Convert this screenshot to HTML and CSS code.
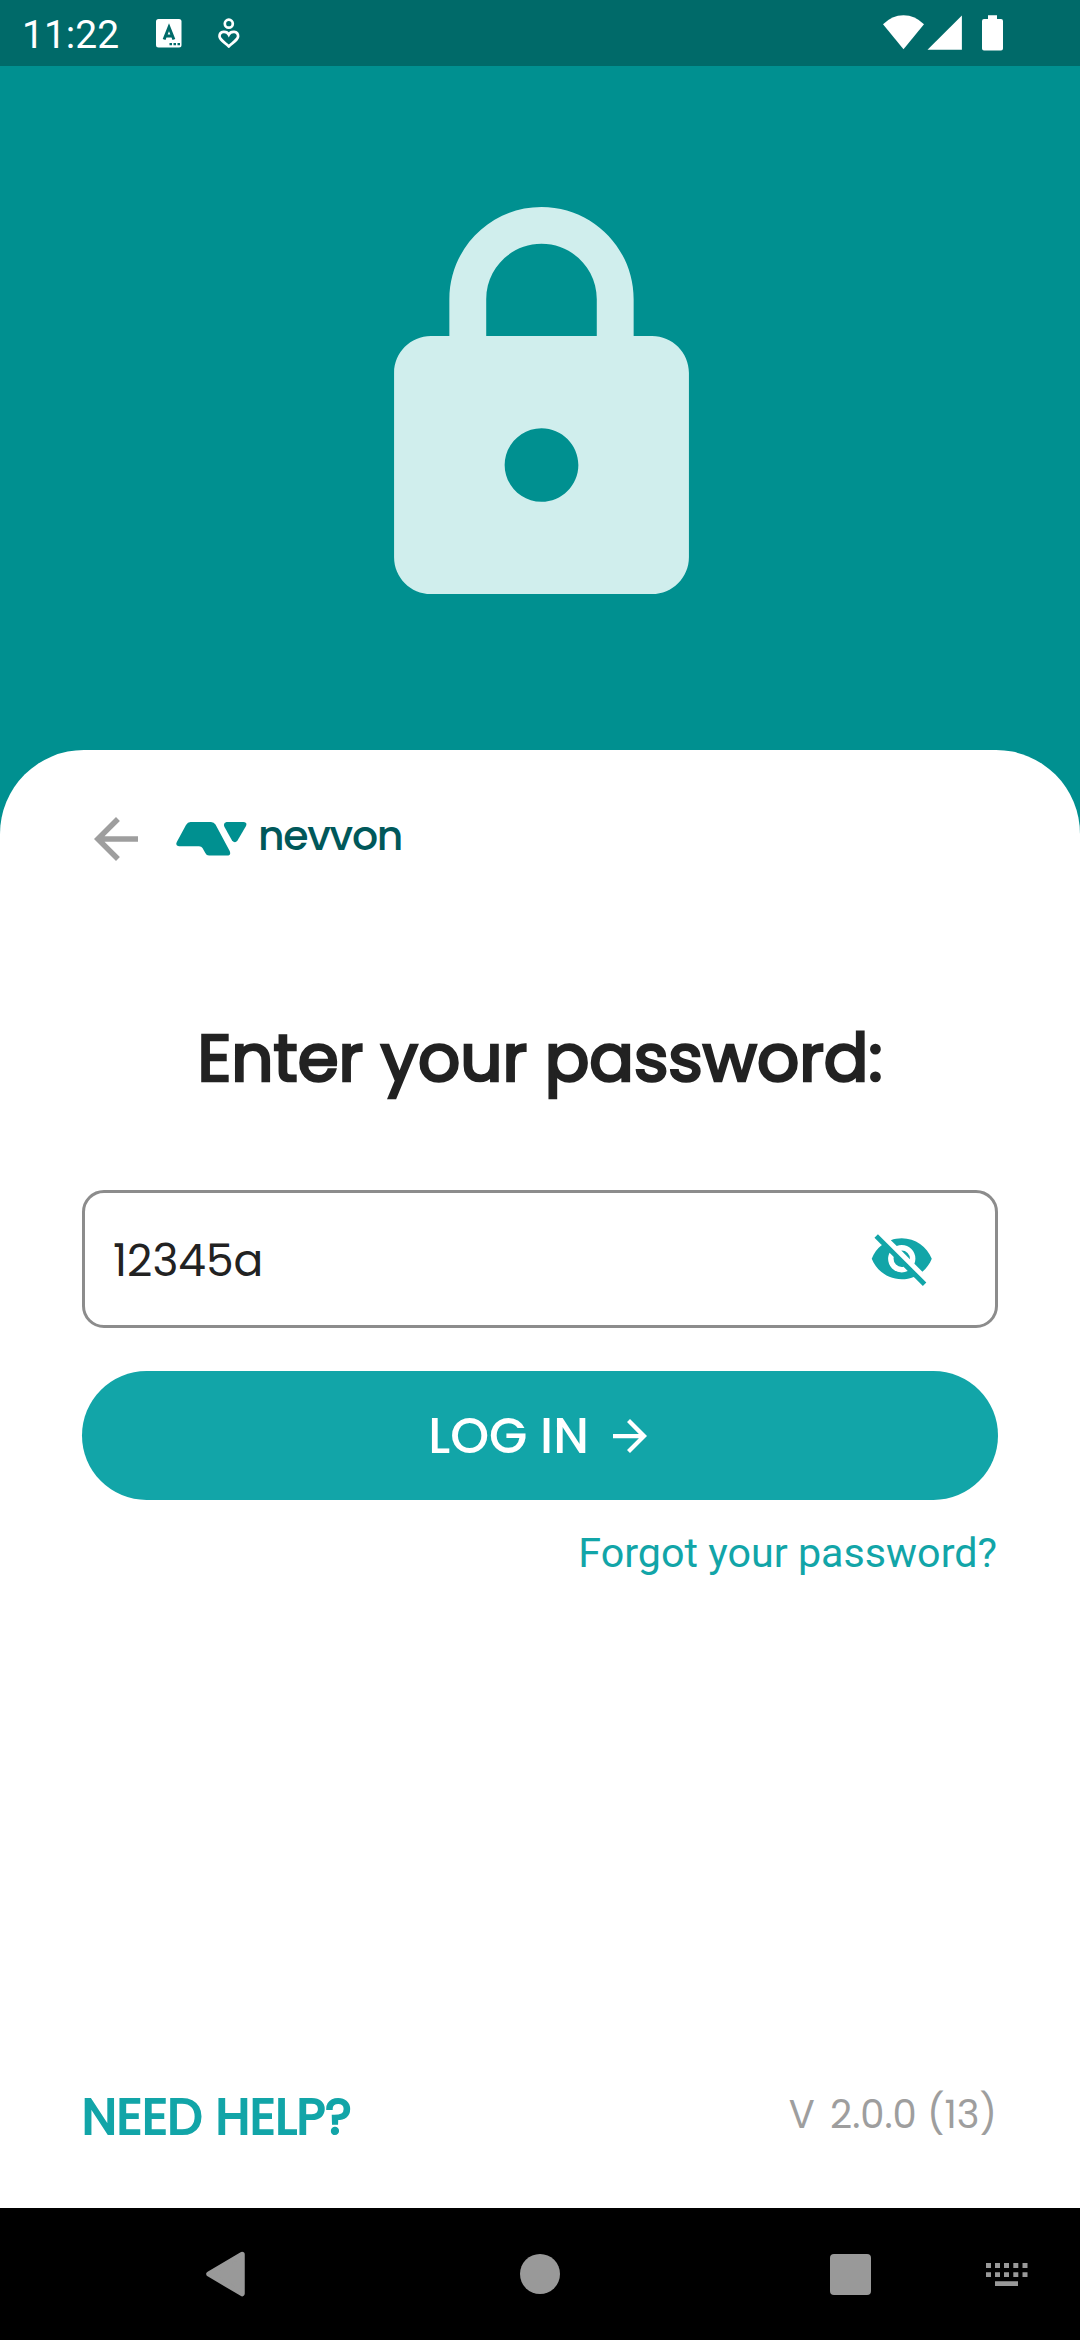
FILE: index.html
```html
<!DOCTYPE html>
<html lang="en">
<head>
<meta charset="utf-8">
<title>Nevvon – Log in</title>
<link rel="stylesheet" href="styles.css">
</head>
<body>
<div class="screen">
  <header class="status">
    <span class="time">11:22</span>
    <svg class="st-a" width="26" height="29" viewBox="0 0 26 29"><rect width="25.5" height="28.5" rx="2.5" fill="#fff"/><path d="M8.1 20.5L13 8.3L17.9 20.5M9.8 17H16.2" fill="none" stroke="#006a69" stroke-width="3"/><path d="M13.5 24h2.5v2.2h-2.5zM17.5 24h2.5v2.2h-2.5zM21.5 24h2.5v2.2h-2.5z" fill="#006a69"/></svg>
    <svg class="st-heart" width="22" height="30" viewBox="0 0 22 30"><g fill="none" stroke="#fff" stroke-width="2.7"><circle cx="10.8" cy="5.7" r="4"/><path d="M10.800 16.600C8.800 12.800 1.500 12.600 1.500 18.300C1.500 21 4 22.500 10.800 28.400C17.600 22.500 20.100 21 20.100 18.300C20.100 12.600 12.800 12.800 10.800 16.600Z"/></g></svg>
    <svg class="st-sys" width="121" height="37" viewBox="0 0 121 37" fill="#fff"><path d="M0 9.3Q9 .2 20.5 .2T41 9.3L20.5 34.3Z"/><path d="M44.5 34.8L78.9 .4V34.8Z"/><path d="M105 .2h9V4h4a2 2 0 0 1 2 2v27.500a2 2 0 0 1-2 2h-17a2 2 0 0 1-2-2V6a2 2 0 0 1 2-2h4z"/></svg>
  </header>
  <section class="hero">
    <svg class="lock" width="295" height="387" viewBox="4 1 16 21"><path fill="#d0eeed" d="M18 8h-1V6c0-2.760-2.240-5-5-5S7 3.240 7 6v2H6c-1.100 0-2 .9-2 2v10c0 1.100.9 2 2 2h12c1.100 0 2-.9 2-2V10c0-1.100-.9-2-2-2zm-6 9c-1.100 0-2-.9-2-2s.9-2 2-2 2 .9 2 2-.9 2-2 2zM9 8V6c0-1.660 1.340-3 3-3s3 1.340 3 3v2z"/></svg>
  </section>
  <main class="sheet">
    <div class="brand">
      <svg class="back" width="44" height="44" viewBox="4 4 16 16"><path fill="#9e9e9e" d="M20 11H7.830l5.590-5.590L12 4l-8 8 8 8 1.410-1.410L7.830 13H20z"/></svg>
      <svg class="mark" width="71" height="34" viewBox="0 0 71 34" fill="#009090"><path d="M14.500 0H35Q38 0 39.500 2.600L53.700 29Q55.500 33.500 51 33.500H33Q30.500 33.500 29.300 31L26.500 26Q25.500 24.200 23 24.200H3Q-1 24 .8 20L10 3Q11.700 0 14.500 0Z"/><path d="M50.500 0H67.500Q71.500 .3 70 4L61.500 18.500Q59 21.800 56 18.500L48.500 5Q46.700 .8 50.500 0Z"/></svg>
      <span class="wordmark">nevvon</span>
    </div>
    <h1 class="title">Enter your password:</h1>
    <div class="field">
      <input class="password" type="text" value="12345a" aria-label="Password">
      <svg class="eye" width="65.500" height="65.500" viewBox="0 0 24 24"><path fill="#12a5a8" d="M11.830 9L15 12.160C15 12.110 15 12.050 15 12A3 3 0 0 0 12 9C11.940 9 11.890 9 11.830 9M7.530 9.800L9.080 11.350C9.030 11.560 9 11.770 9 12A3 3 0 0 0 12 15C12.220 15 12.440 14.970 12.650 14.920L14.200 16.470C13.530 16.800 12.790 17 12 17A5 5 0 0 1 7 12C7 11.210 7.200 10.470 7.530 9.800M2 4.270L4.280 6.550L4.730 7C3.080 8.300 1.780 10 1 12C2.730 16.390 7 19.500 12 19.500C13.550 19.500 15.030 19.200 16.380 18.660L16.810 19.080L19.730 22L21 20.730L3.270 3M12 7A5 5 0 0 1 17 12C17 12.640 16.870 13.260 16.640 13.820L19.570 16.750C21.070 15.500 22.270 13.860 23 12C21.270 7.610 17 4.500 12 4.500C10.600 4.500 9.260 4.750 8 5.200L10.170 7.350C10.740 7.130 11.350 7 12 7Z"/></svg>
    </div>
    <button class="login"><span class="login-text">LOG IN</span><svg width="34" height="34" viewBox="4 4 16 16"><path fill="#fff" d="M12 4l-1.410 1.410L16.170 11H4v2h12.170l-5.580 5.590L12 20l8-8z"/></svg></button>
    <a class="forgot">Forgot your password?</a>
    <footer class="foot">
      <a class="help">NEED HELP?</a>
      <span class="version"><span class="v">V</span> 2.0.0 (13)</span>
    </footer>
  </main>
  <nav class="nav">
    <svg class="nav-back" width="40" height="46" viewBox="0 0 40 46"><path d="M36 3.500L3 23L36 42.500Z" fill="#999" stroke="#999" stroke-width="5.500" stroke-linejoin="round"/></svg>
    <span class="nav-home"></span>
    <span class="nav-recent"></span>
    <svg class="nav-keys" width="42" height="23" viewBox="0 0 42 23" fill="#999"><path d="M0 0h5v5H0zM9 0h5v5H9zM18 0h5v5h-5zM27.300 0h5v5h-5zM36.500 0h5v5h-5zM0 9.200h5v4.800H0zM9 9.200h5v4.800H9zM18 9.200h5v4.800h-5zM27.300 9.200h5v4.800h-5zM36.500 9.200h5v4.800h-5zM9 18.300h23V23H9z"/></svg>
  </nav>
</div>
</body>
</html>
```
FILE: styles.css
```css
* { box-sizing: border-box; }
body { margin: 0; }
.screen {
  display: flex;
  flex-direction: column;
  width: 1080px;
  height: 2340px;
  overflow: hidden;
  background: #009090;
  font-family: Poppins, Inter, sans-serif;
  font-feature-settings: "cv11" 1;
}
.status {
  display: flex;
  height: 66px;
  padding: 0 76px 0 22px;
  background: #006a69;
}
.time {
  width: 134px;
  padding-top: 15px;
  font: 400 39px/40px Roboto, sans-serif;
  color: #fff;
}
.st-a { margin-top: 19px; }
.st-heart { margin: 18px 0 0 36px; }
.st-sys { margin: 15px 0 0 auto; }

.hero {
  display: flex;
  justify-content: center;
  height: 684px;
  padding: 140.5px 0 0 2px;
}
.sheet {
  display: flex;
  flex-direction: column;
  flex: 1;
  padding: 38px 82px 52px;
  background: #fff;
  border-radius: 84px 84px 0 0;
}
.brand {
  display: flex;
  align-items: center;
  height: 101px;
  padding-left: 12px;
}
.mark { margin-left: 38px; }
.wordmark {
  margin: -6px 0 0 11px;
  font-size: 41px;
  font-weight: 500;
  line-height: 50px;
  letter-spacing: -1.3px;
  color: #00585a;
}
.title {
  margin: 119px 0 0;
  font-size: 66px;
  font-weight: 400;
  line-height: 100px;
  text-align: center;
  white-space: nowrap;
  color: #222;
  -webkit-text-stroke: 2.7px #222;
}
.field {
  display: flex;
  align-items: center;
  justify-content: space-between;
  height: 138px;
  margin-top: 82px;
  padding: 0 61px 0 28px;
  border: 3px solid #8c8c8c;
  border-radius: 22px;
}
.password {
  width: 500px;
  padding: 3px 0 0;
  border: 0;
  outline: 0;
  background: none;
  font: inherit;
  font-feature-settings: inherit;
  font-size: 44px;
  line-height: 60px;
  color: #222;
}
.login {
  display: flex;
  align-items: center;
  justify-content: center;
  gap: 24px;
  height: 129px;
  margin-top: 43px;
  padding: 0 5px 0 0;
  border: 0;
  border-radius: 65px;
  background: #12a5a8;
  font: inherit;
  color: #fff;
}
.login-text {
  font-size: 49.5px;
  font-weight: 500;
  line-height: 60px;
}
.forgot {
  align-self: flex-end;
  margin: 23px 1px 0 0;
  font: 400 41.25px/60px Roboto, sans-serif;
  color: #12a5a8;
}
.foot {
  display: flex;
  align-items: center;
  justify-content: space-between;
  height: 80px;
  margin-top: auto;
}
.help {
  margin-top: 1px;
  font-size: 49.5px;
  font-weight: 400;
  color: #12a5a8;
  -webkit-text-stroke: 2.2px #12a5a8;
}
.version {
  margin: -4px 1px 0 0;
  font-size: 38.5px;
  color: #9e9e9e;
}
.v { margin-right: 5px; }
.nav {
  display: flex;
  align-items: center;
  height: 132px;
  padding-left: 206px;
  background: #000;
}
.nav-home {
  width: 40px;
  height: 40px;
  margin-left: 274px;
  border-radius: 50%;
  background: #999;
}
.nav-recent {
  width: 41px;
  height: 41px;
  margin-left: 270px;
  border-radius: 4px;
  background: #999;
}
.nav-keys { margin-left: 115px; }
```
